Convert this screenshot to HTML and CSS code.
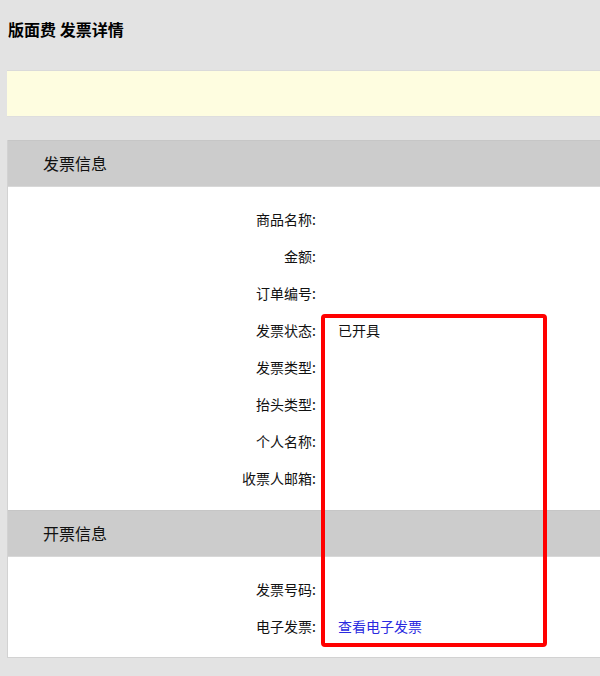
FILE: index.html
```html
<!DOCTYPE html>
<html lang="zh-CN">
<head>
<meta charset="utf-8">
<title>版面费 发票详情</title>
<link rel="stylesheet" href="styles.css">
</head>
<body>
<h1 class="page-title">版面费 发票详情</h1>
<div class="notice"></div>
<div class="card">
  <div class="section-head">发票信息</div>
  <div class="rows">
    <div class="row"><span class="label">商品名称:</span><span class="value"></span></div>
    <div class="row"><span class="label">金额:</span><span class="value"></span></div>
    <div class="row"><span class="label">订单编号:</span><span class="value"></span></div>
    <div class="row"><span class="label">发票状态:</span><span class="value">已开具</span></div>
    <div class="row"><span class="label">发票类型:</span><span class="value"></span></div>
    <div class="row"><span class="label">抬头类型:</span><span class="value"></span></div>
    <div class="row"><span class="label">个人名称:</span><span class="value"></span></div>
    <div class="row"><span class="label">收票人邮箱:</span><span class="value"></span></div>
  </div>
  <div class="section-head">开票信息</div>
  <div class="rows">
    <div class="row"><span class="label">发票号码:</span><span class="value"></span></div>
    <div class="row"><span class="label">电子发票:</span><span class="value"><a class="link" href="#">查看电子发票</a></span></div>
  </div>
</div>
<div class="highlight"></div>
</body>
</html>
```
FILE: styles.css
```css
html, body {
  margin: 0;
  padding: 0;
}
body {
  background: #e3e3e3;
  font-family: "Noto Sans CJK SC", "Noto Sans", sans-serif;
  color: #111;
  width: 620px;
  position: relative;
  overflow: hidden;
}
.page-title {
  margin: 0;
  padding: 19px 8px 0 8px;
  height: 70px;
  box-sizing: border-box;
  font-size: 16px;
  line-height: 20px;
  font-weight: bold;
  color: #000;
}
.notice {
  margin-left: 7px;
  height: 47px;
  box-sizing: border-box;
  background: #fefde0;
  border-top: 1px solid #dadada;
  border-bottom: 1px solid #dedede;
}
.card {
  margin: 23px 0 0 7px;
  background: #fff;
  border: 1px solid #d2d2d2;
  border-right: none;
  border-top: none;
}
.section-head {
  height: 47px;
  box-sizing: border-box;
  background: #cccccc;
  border-top: 1px solid #c6c6c6;
  border-bottom: 1px solid #d8d8d8;
  padding-left: 35px;
  font-size: 16px;
  line-height: 45px;
  color: #111;
}
.rows {
  padding: 13px 0 14px 0;
}
.card .rows:last-child {
  padding-bottom: 13px;
}
.row {
  display: flex;
  height: 37px;
  align-items: center;
  font-size: 14px;
}
.label {
  width: 308px;
  text-align: right;
  flex: none;
}
.value {
  padding-left: 22px;
}
.link {
  color: #2a2ae0;
  text-decoration: none;
}
.highlight {
  position: absolute;
  left: 321px;
  top: 314px;
  width: 226px;
  height: 333px;
  box-sizing: border-box;
  border: 4px solid #ff0000;
  border-radius: 4px;
}
```
